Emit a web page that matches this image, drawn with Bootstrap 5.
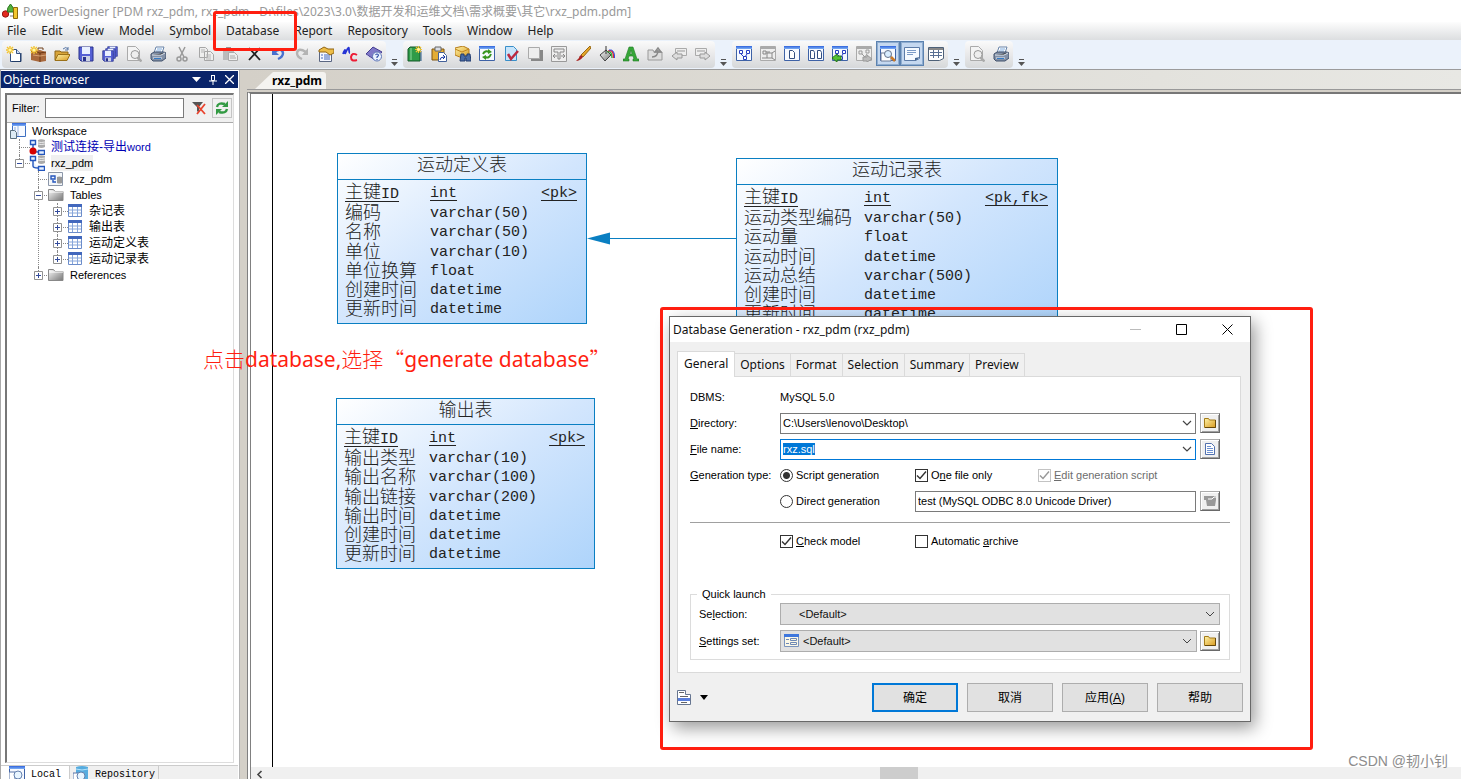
<!DOCTYPE html>
<html lang="en">
<head>
<meta charset="utf-8">
<meta name="viewport" content="width=device-width, initial-scale=1">
<title>PowerDesigner</title>
<link href="https://cdn.jsdelivr.net/npm/bootstrap@5.3.0/dist/css/bootstrap.min.css" rel="stylesheet">
<style>
:root{--ui:"Noto Sans","Noto Sans CJK SC",sans-serif;--small-ui:"Liberation Sans","Noto Sans CJK SC",sans-serif;--mono:"Liberation Mono","Noto Sans CJK SC",monospace;--red:#ff1e10;--ink:#0a7fc2}
body{font-family:var(--ui);font-size:12px;line-height:16px;color:#222;background:#d4d0c8;height:100vh;overflow:hidden}
svg{display:block;flex:none}
button{font:inherit;color:inherit}
.title-bar{height:22px;background:#fff;color:#999;padding:2px 2px 0;gap:5px;font-size:12px}
.menu-bar{height:18px;padding-left:7px;gap:15px;background:linear-gradient(#fdfdfd,#dcdee0)}
.menu-bar button,.plain{border:0;background:none;padding:0}
.tool-bar{height:30px;padding:1px 2px;background:#ebf2fb;border-bottom:1px solid #9b9b9b}
.tool-group{height:27px;border-radius:4px;background:linear-gradient(#fafafa,#e9e9ea 50%,#d6d8da)}
.tool-group button{width:24px;height:25px;border:0;background:none;padding:0 4px}
.tool-group button.pressed{border:1px solid #5c82b0;background:#c5d8f0;padding:0 3px;box-shadow:inset 0 0 0 1px #8fadd0}
.overflow-btn{width:17px;height:27px;border:0;background:none;padding:16px 0 0 5px}
.browser-pane{width:240px;background:#fff;border-left:1px solid #aaa;border-right:1px solid #b4b4b4;padding:1px 1px 0 0}
.pane-head{height:17px;background:#0a246a;color:#fff;padding:0 4px 0 2px;font-size:12px}
.pane-box{margin:5px 4px 2px 4px;border:2px solid #777;border-right:1px solid #ddd;border-bottom:1px solid #ddd}
.filter-row{height:28px;background:#f0f0f0;border-bottom:1px solid #aaa;padding:0 5px 2px;gap:5px;font:11px var(--small-ui);color:#000}
.filter-row input{width:139px;height:20px;border:1px solid #7a7a7a;background:#fff}
.filter-row .plain{margin-left:2px}
.refresh-btn{width:20px;height:20px;border:1px solid #c4c4c4;padding:1px;background:#f0f0f0}
.tree{padding-left:3px;font:11px/16px var(--small-ui);color:#000}
.tree .cjk{font-size:12px}
.tree .picked{background:#f0f0f0}
.tree .detached{color:#0000b4}
.tree ul{list-style:none;margin:0;padding:0}
.tree li{position:relative;padding-left:19px}
.tree li::before{content:"";position:absolute;left:9px;top:0;bottom:0;border-left:1px dotted #888}
.tree li:last-child::before{bottom:auto;height:8px}
.tree li::after{content:"";position:absolute;left:9px;top:8px;width:11px;border-top:1px dotted #888}
.tree-row{height:16px;gap:6px}
.twisty{position:absolute;z-index:1;left:5px;top:4px;width:9px;height:9px}
.pane-tabs{height:14px;background:#f0f0f0;border-top:1px solid #ccc;font:10px/18px var(--mono);color:#000;overflow:hidden}
.pane-tabs button{border:0;border-right:1px solid #ccc;background:none;padding:0 3px;gap:6px;height:18px}
.pane-tabs .on{background:#fff;padding:0 8px}
.editor{margin-left:7px;min-width:0}
.doc-tabs{height:20px;background:linear-gradient(90deg,#d4d0c8,#e8e8e4);padding:2px 0 0 8px;border-bottom:1px solid #999}
.doc-tab{border:0;padding:0 4px 0 17px;font-size:12px;line-height:16px;font-weight:700;color:#000;background:#f4f3f0;clip-path:polygon(18px 0,100% 0,100% 100%,0 100%);border-radius:0 3px 0 0}
.canvas-frame{margin-top:2px;border-left:4px double #808080;border-top:2px solid #777;background:#fff}
.model-canvas{position:relative;overflow:hidden}
.page-edge{margin-left:21px;width:1px;background:#000}
.entity{position:absolute;border:1px solid var(--ink);background:linear-gradient(145deg,#fff,#d3e6fd 50%,#aed4fb);color:#222;font:15px/18px var(--mono)}
.entity h2{font-size:18px;font-weight:300;line-height:25px;height:26px;margin:0;text-align:center;border-bottom:1px solid var(--ink)}
.entity table{width:100%;height:137px;margin:3px 0;color:#222}
.entity td{padding:0;white-space:pre}
.entity td:first-child{font-size:18px;font-weight:300;padding-left:7px;line-height:18px}
.entity td:first-child span{font-size:15px;font-weight:400}
.entity td:last-child{text-align:right;padding-right:9px}
.entity u{text-underline-offset:3px;text-decoration-thickness:1px}
.define-tbl{left:86px;top:59px;width:250px}
.record-tbl{left:485px;top:64px;width:322px}
.output-tbl{left:85px;top:304px;width:259px}
.define-tbl td:first-child,.output-tbl td:first-child{width:92px}
.record-tbl td:first-child{width:127px}
.link-line{position:absolute;left:336px;top:138px}
.h-scroll{height:12px;background:#f0f0f0}
.h-scroll .arrow{width:20px;border:0;padding:0 0 0 4px;background:none}
.h-scroll .track{flex:1}
.h-scroll .thumb{position:absolute;left:52%;width:38px;height:12px;background:#cdcdcd}
.note-box{position:absolute;border:3px solid var(--red);border-radius:3px;pointer-events:none}
.note-menu{left:213px;top:11px;width:84px;height:40px}
.note-dialog{left:660px;top:307px;width:653px;height:443px}
.note-text{position:absolute;left:203px;top:344px;font-size:21px;line-height:28px;color:var(--red);white-space:pre}
.note-text span{font-family:"Noto Sans CJK SC",sans-serif;font-weight:300}
.water{position:absolute;right:13px;bottom:8px;font:14px/20px var(--small-ui);color:#8d8d8d}
.gen-dialog{position:absolute;left:669px;top:316px;width:582px;background:#f0f0f0;border:1px solid #686868;box-shadow:4px 6px 16px rgba(0,0,0,.4);font:11px/14px var(--small-ui);color:#000}
.dlg-title{height:25px;background:#fff;padding:0 17px 0 3px;gap:35px;font:12px/24px var(--ui);color:#111}
.dlg-tabs{padding:9px 7px 0;font:12px/16px var(--ui)}
.dlg-tabs button{height:23px;border:1px solid #dadada;border-left:0;border-bottom:0;background:#f0f0f0;padding:0 5px;color:#111}
.dlg-tabs .on{height:26px;background:#fff;border-left:1px solid #dadada;padding:0 6px 2px;margin-bottom:-1px;position:relative}
.dlg-panel{margin:0 9px 0 7px;border:1px solid #dadada;background:#fff;padding:7px 11px 12px 12px}
.f-row{display:grid;grid-template-columns:90px 135px 1fr 20px;align-items:center;height:26px;margin-right:9px}
.f-row .wide{grid-column:2/4;margin-right:4px}
.f-row .rest{grid-column:3/4;margin-right:4px}
.combo{position:relative}
.combo input,.txt{width:100%;height:21px;border:1px solid #7a7a7a;padding:0 2px;outline:0;background:#fff;color:#000;display:block}
.combo input:focus{border-color:#0078d7}
.combo input::selection{background:#0078d7;color:#fff}
.combo button{position:absolute;right:4px;top:7px}
.bevel{width:20px;height:20px;border:1px solid #ababab;border-right-color:#696969;border-bottom-color:#696969;box-shadow:inset 1px 1px #fff,inset -1px -1px #a0a0a0;background:#f0f0f0;padding:0 1px}
.tick{display:flex;align-items:center;gap:3px}
.tick input{appearance:none;margin:0;width:13px;height:13px;border:1px solid #333;background:#fff center/11px no-repeat}
.tick input[type=checkbox]:checked{background-image:url("data:image/svg+xml,%3Csvg xmlns='http://www.w3.org/2000/svg' viewBox='0 0 11 11'%3E%3Cpath d='M1 5.5l3 3 6-7' fill='none' stroke='%23333' stroke-width='1.4'/%3E%3C/svg%3E")}
.tick input[type=radio]{border-radius:50%}
.tick input[type=radio]:checked{background-image:radial-gradient(circle,#333 3px,transparent 4px)}
.tick input:disabled{border-color:#888;opacity:.5}
.tick.off{color:#6d6d6d}
.one-file{width:123px}
.rule{border-top:1px solid #a0a0a0;margin:8px -1px 5px 0}
.dlg-panel fieldset{border:1px solid #dcdcdc;margin:33px -1px 0 0;padding:0 0 5px 8px}
.dlg-panel legend{float:none;width:auto;font-size:11px;line-height:14px;margin:0 0 0 -2px;padding:0 5px}
.quick{grid-template-columns:81px 1fr 20px}
.quick + .quick{margin-top:1px}
.quick .full{grid-column:2/4}
.drop{width:100%;height:22px;border:1px solid #adadad;padding:0 18px;font:inherit;color:#111;appearance:none;background:#e1e1e1 url("data:image/svg+xml,%3Csvg xmlns='http://www.w3.org/2000/svg' viewBox='0 0 10 6'%3E%3Cpath d='M1 1l4 4 4-4' fill='none' stroke='%23444'/%3E%3C/svg%3E") right 4px center/10px 6px no-repeat}
.with-icon{position:relative;margin-right:3px}
.with-icon svg{position:absolute;left:4px;top:3px}
.with-icon .drop{padding-left:22px}
.dlg-foot{padding:10px 7px 9px;gap:9px}
.dlg-foot .act{width:86px;height:29px;border:1px solid #adadad;background:#e1e1e1;font-size:12px;color:#000}
.dlg-foot .act.primary{border:2px solid #0078d7}
</style>
</head>
<body class="d-flex flex-column position-relative">
<svg width="0" height="0" class="position-absolute" aria-hidden="true">
<defs>
<linearGradient id="gold" x2="1" y2="1"><stop stop-color="#fff3a8"/><stop offset="1" stop-color="#d89a20"/></linearGradient>
<linearGradient id="sky" x2="0" y2="1"><stop stop-color="#2f63dd"/><stop offset="1" stop-color="#7fb0f4"/></linearGradient>
<linearGradient id="steel" x2="1" y2="1"><stop stop-color="#fafafa"/><stop offset="1" stop-color="#777"/></linearGradient>
<symbol id="spark" viewBox="0 0 16 16"><path d="M4 0v8M0 4h8M1 1l6 6M7 1L1 7" stroke="#f3c330" stroke-width="1.4"/><circle cx="4" cy="4" r="1.6" fill="#fff6a5"/></symbol>
<symbol id="new" viewBox="0 0 16 16"><path d="M4.500 3.500h6l4 4v8h-10z" fill="#fff" stroke="#334f80"/><path d="M10.500 3.500v4h4" fill="#cfe0f5" stroke="#334f80"/><path d="M15 7v8.500H6" fill="none" stroke="#203b66"/><use href="#spark"/></symbol>
<symbol id="case" viewBox="0 0 16 16"><path d="M1 5l9-1 6 2v9l-6 1-9-2z" fill="#a8683c"/><path d="M1 5l9 2 6-1M10 7v9" stroke="#6c3815" fill="none"/><path d="M3 9l7 1 6-1" stroke="#d6a273" fill="none"/><path d="M8 4V2h5v2" fill="none" stroke="#71401c"/><use href="#spark"/></symbol>
<symbol id="open" viewBox="0 0 16 16"><path d="M1 14V5h5l1 1h7v3" fill="#d9a53a" stroke="#8c6417"/><path d="M1 14.500l3-6h12l-3 6z" fill="url(#gold)" stroke="#9b7118"/><path d="M9 3q3-3 5 0m0-2v3h-3" fill="none" stroke="#5876a5"/></symbol>
<symbol id="save" viewBox="0 0 16 16"><path d="M1 1h14v14H3l-2-2z" fill="#5560d4" stroke="#28318b"/><path d="M4 1h8v7H4z" fill="#e9f0ff"/><path d="M4 10h8v5H4z" fill="#ccd3e5"/><path d="M5 11h3v4H5z" fill="#28318b"/></symbol>
<symbol id="saveall" viewBox="0 0 16 16"><use href="#save" x="5" width="11" height="11"/><use href="#save" x="3" y="2" width="11" height="11"/><use href="#save" y="4" width="12" height="12"/></symbol>
<symbol id="preview" viewBox="0 0 16 16"><path d="M1.500.5h8l4 4v10h-12z" fill="#f4f4f4" stroke="#aaa"/><circle cx="9" cy="8.500" r="4" fill="#eee" stroke="#999"/><path d="M11.500 11.500l4 4" stroke="#aaa" stroke-width="2.500"/></symbol>
<symbol id="print" viewBox="0 0 16 16"><path d="M4 7l2-6h8l-2 6z" fill="#fff" stroke="#6883a8"/><path d="M7 3h5M6 5h5" stroke="#7caade"/><path d="M1 8l3-2h10l2 1v5l-4 3H3l-2-2z" fill="#8391a7" stroke="#41516b"/><path d="M2 9h9l4-2M3 12h9" stroke="#e6edf6"/><path d="M4 12.500h7" stroke="#347ac4"/></symbol>
<symbol id="cut" viewBox="0 0 16 16"><path d="M5 1l5 10M11 1L6 11" stroke="#999" stroke-width="1.500"/><circle cx="5" cy="13" r="2" fill="none" stroke="#999" stroke-width="1.500"/><circle cx="11" cy="13" r="2" fill="none" stroke="#999" stroke-width="1.500"/></symbol>
<symbol id="copy" viewBox="0 0 16 16"><path d="M1.500 1.500h6l2 2v8h-8zM6.500 5.500h6l3 3v6h-9z" fill="#eee" stroke="#a6a6a6"/><path d="M8 9h5M8 11h5M8 13h5M3 4h4M3 6h3" stroke="#b5b5b5"/></symbol>
<symbol id="pasteoff" viewBox="0 0 16 16"><path d="M1 3h11v11H1z" fill="#bbb"/><path d="M4 1h5v3H4z" fill="#999"/><path d="M6.500 6.500h6l3 3v5h-9z" fill="#eee" stroke="#aaa"/><path d="M8 10h5M8 12h6" stroke="#aaa"/></symbol>
<symbol id="del" viewBox="0 0 16 16"><path d="M3 2l11 12M14 2L3 14" stroke="#222" stroke-width="1.800"/></symbol>
<symbol id="undo" viewBox="0 0 16 16"><path d="M4 6q8-5 9 1 0 4-5 6" fill="none" stroke="#4971cf" stroke-width="2.400"/><path d="M2 2v7h7z" fill="#4971cf"/></symbol>
<symbol id="redo" viewBox="0 0 16 16"><path d="M12 6Q4 1 3 7q0 4 5 6" fill="none" stroke="#b4b4b4" stroke-width="2.400"/><path d="M14 2v7H8z" fill="#b4b4b4"/></symbol>
<symbol id="props" viewBox="0 0 16 16"><path d="M1.500 5.500h12v10h-12z" fill="#f5f7ff" stroke="#5a6682"/><path d="M3 9h2M3 12h2M6 9h6M6 11h6M6 13h6" stroke="#4267ba"/><path d="M1 4l5-3 4 2h6v4l-4 2-4-3H1z" fill="#edbd47" stroke="#916513"/></symbol>
<symbol id="namecode" viewBox="0 0 16 16"><path d="M1 8Q4 0 3 8q4-9 4-5t1 4" fill="none" stroke="#2533d4" stroke-width="1.800"/><path d="M15 9q-5-3-6 2 0 5 6 3" fill="none" stroke="#ed1c35" stroke-width="2"/></symbol>
<symbol id="help" viewBox="0 0 16 16"><path d="M0 8l7-7 9 5-7 8z" fill="#8078c8" stroke="#443d90"/><path d="M0 9l8 6 7-8" fill="none" stroke="#d9d9f5"/><circle cx="11" cy="10.500" r="4.500" fill="#edf3ff" stroke="#5c75b4"/><path d="M9.500 9q1.500-2 3 0 0 1-1.500 2v1m0 1v1" fill="none" stroke="#3551aa" stroke-width="1.200"/></symbol>
<symbol id="book" viewBox="0 0 16 16"><path d="M1 3l2-2h10v14H1z" fill="#2f9b48" stroke="#155929"/><path d="M4 2v12" stroke="#8edc9d"/><path d="M14 5v10" stroke="#315c90"/><g transform="translate(8)"><use href="#spark" width="14" height="14"/></g></symbol>
<symbol id="clip" viewBox="0 0 16 16"><path d="M1 3h12v11H1z" fill="#e3ad35" stroke="#7e5511"/><path d="M4 1h6v4H4z" fill="#d9dce3" stroke="#666"/><path d="M7.500 6.500h5l3 3v6h-8z" fill="#fff" stroke="#426099"/><path d="M9 14q0-3 4-3m-1-2l2 2-2 2" fill="none" stroke="#1939a5"/></symbol>
<symbol id="find" viewBox="0 0 16 16"><path d="M0 2l8-2 6 3v5l-7 4-7-3z" fill="url(#gold)" stroke="#b67c1a"/><path d="M0 3l7 3 7-3" stroke="#c0851f" fill="none"/><path d="M6 8h3v2h3V8h3l1 7h-5v-3h-1v3H5z" fill="#486ba5" stroke="#223d6e"/></symbol>
<symbol id="win" viewBox="0 0 16 16"><path d="M.5.5h15v14H.5z" fill="#f6f9ff" stroke="#3e62a6"/><path d="M0 0h16v3H0z" fill="url(#sky)"/></symbol>
<symbol id="sync" viewBox="0 0 16 16"><use href="#win"/><path d="M4 8q2-4 6-2M12 8q-2 5-6 3" stroke="#37951f" stroke-width="2" fill="none"/><path d="M9 3v5l4-2zM7 9v5l-4-3z" fill="#37951f"/></symbol>
<symbol id="check" viewBox="0 0 16 16"><path d="M2.500.5h8l3 3v11h-11z" fill="#c7e4fa" stroke="#398fc9"/><path d="M5 8l3 5 7-8" fill="none" stroke="#bb2941" stroke-width="2.500"/></symbol>
<symbol id="shadow" viewBox="0 0 16 16"><path d="M4 4h12v11H4z" fill="#888"/><path d="M1.500 1.500h11v11h-11z" fill="#eee" stroke="#aaa"/></symbol>
<symbol id="textbox" viewBox="0 0 16 16"><path d="M.5.5h15v15H.5z" fill="#eee" stroke="#999"/><path d="M3 3h10v3H9v7H7V6H3zM2 10h4M10 10h4M4 8l-2 2 2 2M12 8l2 2-2 2" fill="none" stroke="#888"/></symbol>
<symbol id="brush" viewBox="0 0 16 16"><path d="M15 0L6 9l2 2 8-9z" fill="#e5a629" stroke="#986812"/><path d="M6 9l2 2q-3 4-7 4l3-3q0-2 2-3z" fill="#a92422"/></symbol>
<symbol id="bucket" viewBox="0 0 16 16"><path d="M1 9l6-5 5 5-6 6z" fill="url(#steel)" stroke="#444"/><path d="M7 0v8" stroke="#333"/><path d="M8 6q5-2 5 6" fill="none" stroke="#28ad38" stroke-width="1.300"/><path d="M9 5q6-2 5.500 7" fill="none" stroke="#e52732" stroke-width="1.300"/><path d="M10 4q6-1 5.500 8" fill="none" stroke="#2949e5"/></symbol>
<symbol id="fontA" viewBox="0 0 16 16"><path d="M6 1h4l4 12h2v2h-6v-2h1l-1-3H6l-1 3h1v2H0v-2h2zM8 4L7 8h2z" fill="#35a638" fill-rule="evenodd" stroke="#237d26" stroke-width=".6"/></symbol>
<symbol id="folderup" viewBox="0 0 16 16"><path d="M1 4h5l1 2h8v8H1z" fill="#ddd" stroke="#999"/><path d="M5 11q6 0 6-7M8 6l3-4 3 4z" fill="none" stroke="#888" stroke-width="1.500"/></symbol>
<symbol id="backoff" viewBox="0 0 16 16"><path d="M4.500 2.500h11v7h-11z" fill="#eee" stroke="#aaa"/><path d="M6 5h8" stroke="#999"/><path d="M1 10l5-4v2h5v4H6v2z" fill="#ddd" stroke="#999"/></symbol>
<symbol id="fwdoff" viewBox="0 0 16 16"><path d="M.5 2.500h11v7H.5z" fill="#eee" stroke="#aaa"/><path d="M2 5h8" stroke="#999"/><path d="M15 10l-5-4v2H5v4h5v2z" fill="#ddd" stroke="#999"/></symbol>
<symbol id="nodes" viewBox="0 0 16 16"><path d="M3.500 4.500h3v3h-3zM10.500 4.500h3v3h-3zM7.500 10.500h3v3h-3zM5 8l3 3M11 8l-2 3" fill="#fff" stroke="#293ec0"/></symbol>
<symbol id="diagram" viewBox="0 0 16 16"><use href="#win"/><use href="#nodes"/></symbol>
<symbol id="grayframe" viewBox="0 0 16 16"><path d="M.5.5h15v14H.5z" fill="#eee" stroke="#aaa"/><path d="M0 2h16" stroke="#aaa" stroke-width="2"/><path d="M3 5h3v3H3zM7 7h5v5H7zM6 6h4M2 12h5M12 12l3 2M12 7l3-2" fill="none" stroke="#888"/></symbol>
<symbol id="onepage" viewBox="0 0 16 16"><use href="#win"/><path d="M5.500 4.500h3l2 2v6h-5z" fill="#fff" stroke="#334e80"/></symbol>
<symbol id="twopage" viewBox="0 0 16 16"><use href="#win"/><path d="M2.500 4.500h3l1 2v6h-4zM9.500 4.500h3l1 2v6h-4z" fill="#fff" stroke="#334e80"/></symbol>
<symbol id="diaggo" viewBox="0 0 16 16"><use href="#diagram"/><path d="M0 12l5-4v2h4v4H5v2z" fill="#55c234" stroke="#287a18"/></symbol>
<symbol id="graygo" viewBox="0 0 16 16"><path d="M.5.5h15v14H.5z" fill="#eee" stroke="#aaa"/><path d="M0 2h16" stroke="#aaa" stroke-width="2"/><path d="M3 5h3v3H3zM10 4h3v3h-3zM6 8l3 3M11 8l-2 3" fill="none" stroke="#999"/><path d="M16 13l-5-4v2H7v4h4v1z" fill="#bbb" stroke="#999"/></symbol>
<symbol id="zoompage" viewBox="0 0 16 16"><use href="#win"/><path d="M1 7h7l3 2v6H1z" fill="#fff" stroke="#6c7b96"/><circle cx="8" cy="8" r="3.500" fill="#d9edff" stroke="#66738a"/><path d="M11 11l4 4" stroke="#c97927" stroke-width="2.500"/></symbol>
<symbol id="output" viewBox="0 0 16 16"><path d="M.5 1.500h15v11l-4 2H.5z" fill="#f6faff" stroke="#5c7ba7"/><path d="M3 4.500h9M3 6.500h9M3 8.500h6" stroke="#7c9bc7"/><path d="M16 11l-5 4v-3z" fill="#42638f"/></symbol>
<symbol id="result" viewBox="0 0 16 16"><path d="M.5 1.500h15v11l-4 2H.5z" fill="#fff" stroke="#4e6178"/><path d="M1 3h14" stroke="#888" stroke-width="2"/><path d="M2 6.500h12M2 9.500h12M5.500 4v8M10.500 4v8" stroke="#596f93"/></symbol>
<symbol id="more" viewBox="0 0 7 7"><path d="M1 .5h5" stroke="#555"/><path d="M0 3h7L3.500 7z" fill="#555"/></symbol>
<symbol id="db" viewBox="0 0 16 16"><path d="M9 1q3-1.500 7 0v7q-4 2-7 0z" fill="#aaa"/><path d="M9 3q3 1 7 0M9 5q3 1 7 0" stroke="#eee" fill="none"/><path d="M1.500 1.500h5v4h-5zM9.500 11.500h6v4h-6zM4 6v5q0 2 5 2" fill="#e6f1ff" stroke="#2456bd" stroke-width="1.400"/></symbol>
<symbol id="ws" viewBox="0 0 16 16"><path d="M2.500.5h13v13h-13z" fill="#f7faff" stroke="#3d6fc2"/><path d="M2 0h14v3H2z" fill="url(#sky)"/><path d="M8 3v10" stroke="#9cb8e4"/><path d="M4 5h2M4 7h2" stroke="#8dabdd"/><path d="M.5 7.500h4l2 2v6h-6z" fill="#dcebf5" stroke="#5b7180"/></symbol>
<symbol id="pdm" viewBox="0 0 16 16"><path d="M.5 1.500h14v13H.5z" fill="#f4f7fa" stroke="#8b96a8"/><path d="M3 5h4v3H3zM5 9v2h3" fill="none" stroke="#2456bd" stroke-width="1.400"/><path d="M9 6q2-1 5 0v6q-2 1-5 0z" fill="#999"/></symbol>
<symbol id="folder" viewBox="0 0 16 16"><path d="M.5 4V2.500h5L7 4.500h8v9H.5z" fill="url(#steel)" stroke="#888"/><path d="M1 5h14" stroke="#fff"/></symbol>
<symbol id="grid" viewBox="0 0 16 16"><path d="M1.500 1.500h13v12h-13z" fill="#fff" stroke="#6c8dca"/><path d="M1 1h14v3H1z" fill="#4268bd"/><path d="M2 7h12M2 10h12M5.500 4v9M10.500 4v9" stroke="#87a6da"/></symbol>
<symbol id="plus" viewBox="0 0 9 9"><path d="M.5.5h8v8h-8z" fill="#fff" stroke="#919191"/><path d="M2 4.500h5M4.500 2v5" stroke="#334b9c"/></symbol>
<symbol id="minus" viewBox="0 0 9 9"><path d="M.5.5h8v8h-8z" fill="#fff" stroke="#919191"/><path d="M2 4.500h5" stroke="#334b9c"/></symbol>
<symbol id="yfolder" viewBox="0 0 16 16"><path d="M2.500 12.500v-9h4l1 1.500h6v7.500z" fill="url(#gold)" stroke="#a47b18"/><path d="M13.500 5v7.500H3" fill="none" stroke="#66480a"/></symbol>
<symbol id="sheet" viewBox="0 0 16 16"><path d="M3.500 2.500h6l3 3v8h-9z" fill="#fff" stroke="#5271ae"/><path d="M5 5.500h4M5 7.500h6M5 9.500h6M5 11.500h6" stroke="#6d91d1"/></symbol>
<symbol id="down" viewBox="0 0 10 6"><path d="M1 1l4 4 4-4" fill="none" stroke="#444" stroke-width="1.200"/></symbol>
<symbol id="local" viewBox="0 0 16 16"><use href="#win"/><path d="M0 6h6v9H0z" fill="#fff" stroke="#5874a7"/><circle cx="9" cy="9" r="4" fill="#e8f5ff" stroke="#6480ad"/></symbol>
<symbol id="repo" viewBox="0 0 16 16"><path d="M3 1q6-2 12 0v12H3z" fill="#56acdf"/><path d="M3 3q6 2 12 0" fill="none" stroke="#b6e3fb"/><path d="M0 7h6v8H0z" fill="#fff" stroke="#5874a7"/><circle cx="8" cy="10" r="4" fill="#e8f5ff" stroke="#6480ad"/></symbol>
</defs></svg>

<header>
<div class="title-bar d-flex align-items-center">
<svg width="16" height="16" viewBox="0 0 16 16"><path d="M2 9l6-4M8 12h5" stroke="#777"/><circle cx="3.500" cy="10" r="3.200" fill="#e32b20" stroke="#951a12"/><path d="M8.500 0q4 4 3 8h-6q-1-4 3-8z" fill="#54b13f" stroke="#2b7721"/><path d="M11.500 3.500h4v11h-4z" fill="#f2c62e" stroke="#8d6a0a"/></svg>
<span>PowerDesigner [PDM rxz_pdm, rxz_pdm - D:\files\2023\3.0\数据开发和运维文档\需求概要\其它\rxz_pdm.pdm]</span>
</div>
<nav class="menu-bar d-flex align-items-center"><button>File</button><button>Edit</button><button>View</button><button>Model</button><button>Symbol</button><button>Database</button><button>Report</button><button>Repository</button><button>Tools</button><button>Window</button><button>Help</button></nav>
<div class="tool-bar d-flex" id="tools"></div>
</header>

<main class="d-flex flex-fill overflow-hidden">
<aside class="browser-pane d-flex flex-column flex-shrink-0">
<div class="pane-head d-flex align-items-center"><span class="me-auto">Object Browser</span>
<button class="plain" aria-label="Menu"><svg width="9" height="5"><path d="M0 0h9L4.500 5z" fill="#fff"/></svg></button>
<button class="plain mx-2" aria-label="Pin"><svg width="8" height="10" fill="none" stroke="#fff"><path d="M2.500 0v5.500h3V0M2 .5h4M0 6h8M4 6v4"/></svg></button>
<button class="plain" aria-label="Close"><svg width="9" height="9"><path d="M0 0l9 9M9 0L0 9" stroke="#fff" stroke-width="1.300"/></svg></button></div>
<div class="pane-box flex-fill overflow-hidden">
<div class="filter-row d-flex align-items-center"><label for="filter">Filter:</label><input id="filter" type="text">
<button class="plain" aria-label="Clear filter"><svg width="16" height="16" viewBox="0 0 16 16"><path d="M1 2h11L8 7v6l-2-2V7z" fill="#555"/><path d="M6 5l8 9M14 4l-8 10" stroke="#e9432d" stroke-width="1.800"/></svg></button>
<button class="refresh-btn" aria-label="Refresh"><svg width="16" height="16" viewBox="0 0 16 16"><path d="M3 7q1-5 8-3M13 9q-1 5-8 3" fill="none" stroke="#329a43" stroke-width="2.400"/><path d="M14 1v6H8zM2 15V9h6z" fill="#329a43"/></svg></button></div>
<div class="tree">
<div class="tree-row d-flex align-items-center"><svg width="16" height="16"><use href="#ws"/></svg>Workspace</div>
<ul>
<li><div class="tree-row detached d-flex align-items-center"><svg width="16" height="16" viewBox="0 0 16 16"><use href="#db"/><circle cx="4" cy="12" r="3.500" fill="#d60000"/></svg><span><span class="cjk">测试连接-导出</span>word</span></div></li>
<li><button class="plain twisty" aria-label="Collapse"><svg width="9" height="9"><use href="#minus"/></svg></button><div class="tree-row d-flex align-items-center"><svg width="16" height="16"><use href="#db"/></svg><span class="picked">rxz_pdm</span></div>
<ul>
<li><div class="tree-row d-flex align-items-center"><svg width="16" height="16"><use href="#pdm"/></svg>rxz_pdm</div></li>
<li><button class="plain twisty" aria-label="Collapse"><svg width="9" height="9"><use href="#minus"/></svg></button><div class="tree-row d-flex align-items-center"><svg width="16" height="16"><use href="#folder"/></svg>Tables</div>
<ul class="cjk" id="tables"></ul></li>
<li><button class="plain twisty" aria-label="Expand"><svg width="9" height="9"><use href="#plus"/></svg></button><div class="tree-row d-flex align-items-center"><svg width="16" height="16"><use href="#folder"/></svg>References</div></li>
</ul></li>
</ul></div></div>
<div class="pane-tabs d-flex"><button class="on d-flex"><svg width="16" height="16"><use href="#local"/></svg>Local</button><button class="d-flex"><svg width="16" height="16"><use href="#repo"/></svg>Repository</button></div>
</aside>

<section class="editor d-flex flex-column flex-fill">
<div class="doc-tabs d-flex"><button class="doc-tab">rxz_pdm</button></div>
<div class="canvas-frame d-flex flex-column flex-fill overflow-hidden">
<div class="model-canvas d-flex flex-fill"><div class="page-edge"></div>
<article class="entity define-tbl"><h2>运动定义表</h2><table>
<tr><td><u>主键<span>ID</span></u></td><td><u>int</u></td><td><u>&lt;pk&gt;</u></td></tr>
<tr><td>编码</td><td>varchar(50)</td><td></td></tr><tr><td>名称</td><td>varchar(50)</td><td></td></tr><tr><td>单位</td><td>varchar(10)</td><td></td></tr><tr><td>单位换算</td><td>float</td><td></td></tr><tr><td>创建时间</td><td>datetime</td><td></td></tr><tr><td>更新时间</td><td>datetime</td><td></td></tr></table></article>
<svg class="link-line" width="149" height="13"><path d="M20 6.500h129" stroke="#0a7fc2"/><path d="M0 6.500L23 .5v12z" fill="#0a7fc2"/></svg>
<article class="entity record-tbl"><h2>运动记录表</h2><table>
<tr><td><u>主键<span>ID</span></u></td><td><u>int</u></td><td><u>&lt;pk,fk&gt;</u></td></tr>
<tr><td>运动类型编码</td><td>varchar(50)</td><td></td></tr><tr><td>运动量</td><td>float</td><td></td></tr><tr><td>运动时间</td><td>datetime</td><td></td></tr><tr><td>运动总结</td><td>varchar(500)</td><td></td></tr><tr><td>创建时间</td><td>datetime</td><td></td></tr><tr><td>更新时间</td><td>datetime</td><td></td></tr></table></article>
<article class="entity output-tbl"><h2>输出表</h2><table>
<tr><td><u>主键<span>ID</span></u></td><td><u>int</u></td><td><u>&lt;pk&gt;</u></td></tr>
<tr><td>输出类型</td><td>varchar(10)</td><td></td></tr><tr><td>输出名称</td><td>varchar(100)</td><td></td></tr><tr><td>输出链接</td><td>varchar(200)</td><td></td></tr><tr><td>输出时间</td><td>datetime</td><td></td></tr><tr><td>创建时间</td><td>datetime</td><td></td></tr><tr><td>更新时间</td><td>datetime</td><td></td></tr></table></article>
</div>
<div class="h-scroll d-flex position-relative"><button class="arrow" aria-label="Scroll left"><svg width="8" height="12"><path d="M6.500 4L3 7.500 6.500 11" fill="none" stroke="#444" stroke-width="1.600"/></svg></button><div class="track"></div><div class="thumb"></div></div>
</div>
</section>
</main>

<div class="gen-dialog" role="dialog" aria-label="Database Generation">
<div class="dlg-title d-flex align-items-center"><span class="me-auto">Database Generation - rxz_pdm (rxz_pdm)</span>
<button class="plain" aria-label="Minimize"><svg width="11" height="11"><path d="M0 5.500h11" stroke="#bbb"/></svg></button>
<button class="plain" aria-label="Maximize"><svg width="11" height="11"><path d="M.5.5h10v10H.5z" fill="none" stroke="#000"/></svg></button>
<button class="plain" aria-label="Close"><svg width="11" height="11"><path d="M.5.5l10 10M10.500.5l-10 10" stroke="#000"/></svg></button></div>
<div class="dlg-tabs d-flex align-items-end"><button class="on">General</button><button>Options</button><button>Format</button><button>Selection</button><button>Summary</button><button>Preview</button></div>
<div class="dlg-panel">
<div class="f-row"><span>DBMS:</span><span>MySQL 5.0</span></div>
<div class="f-row"><label for="dir"><u>D</u>irectory:</label><div class="wide combo"><input id="dir" type="text" value="C:\Users\lenovo\Desktop\"><button class="plain" aria-label="Directories"><svg width="10" height="6"><use href="#down"/></svg></button></div><button class="bevel" aria-label="Browse"><svg width="16" height="16"><use href="#yfolder"/></svg></button></div>
<div class="f-row"><label for="fname"><u>F</u>ile name:</label><div class="wide combo"><input id="fname" type="text" value="rxz.sql"><button class="plain" aria-label="File names"><svg width="10" height="6"><use href="#down"/></svg></button></div><button class="bevel" aria-label="File"><svg width="16" height="16"><use href="#sheet"/></svg></button></div>
<div class="f-row"><span><u>G</u>eneration type:</span><label class="tick"><input type="radio" name="gen" checked>Script generation</label><div class="d-flex"><label class="tick one-file"><input type="checkbox" checked><span>O<u>n</u>e file only</span></label><label class="tick off"><input type="checkbox" checked disabled><span><u>E</u>dit generation script</span></label></div></div>
<div class="f-row"><span></span><label class="tick"><input type="radio" name="gen">Direct generation</label><div class="rest"><input class="txt" type="text" aria-label="Connection" value="test (MySQL ODBC 8.0 Unicode Driver)"></div><button class="bevel" aria-label="Connect"><svg width="16" height="16" viewBox="0 0 16 16"><path d="M2 3h12v4l-1 6H5L4 7H2z" fill="#999"/><path d="M6 6h4l2-2h2" stroke="#fff" fill="none"/></svg></button></div>
<div class="rule"></div>
<div class="f-row"><span></span><label class="tick"><input type="checkbox" checked><span><u>C</u>heck model</span></label><label class="tick"><input type="checkbox"><span>Automatic <u>a</u>rchive</span></label></div>
<fieldset><legend>Quick launch</legend>
<div class="f-row quick"><label for="sel">Se<u>l</u>ection:</label><div class="full"><select class="drop" id="sel"><option>&lt;Default&gt;</option></select></div></div>
<div class="f-row quick"><label for="set"><u>S</u>ettings set:</label><div class="with-icon"><select class="drop" id="set"><option>&lt;Default&gt;</option></select><svg width="16" height="16" viewBox="0 0 16 16"><path d="M.5 1.500h14v12H.5z" fill="#fbf8e7" stroke="#7a94bd"/><path d="M0 1h15v3H0z" fill="#3e77dd"/><path d="M2 6.500h3M2 10.500h3M6.500 5.500h6v2h-6zM6.500 9.500h6v2h-6z" fill="none" stroke="#6d88b5"/></svg></div><button class="bevel" aria-label="Browse settings"><svg width="16" height="16"><use href="#yfolder"/></svg></button></div>
</fieldset>
</div>
<div class="dlg-foot d-flex align-items-center"><button class="plain d-flex align-items-center gap-2 me-auto" aria-label="Menu"><svg width="15" height="15" viewBox="0 0 15 15"><path d="M.5.5h8v4h5v10H.5z" fill="#fff" stroke="#677691"/><path d="M2 2.500h5M3 6.500h8M4 12.500h6" stroke="#666"/><path d="M1 8h12v3H1z" fill="#5a7fdc"/></svg><svg width="8" height="5"><path d="M0 0h8L4 5z"/></svg></button>
<button class="act primary">确定</button><button class="act">取消</button><button class="act">应用(<u>A</u>)</button><button class="act">帮助</button></div>
</div>

<div class="note-box note-menu"></div>
<div class="note-box note-dialog"></div>
<div class="note-text"><span>点击</span>database,<span>选择“</span>generate database<span>”</span></div>
<div class="water">CSDN @韧小钊</div>

<script src="https://cdn.jsdelivr.net/npm/bootstrap@5.3.0/dist/js/bootstrap.bundle.min.js"></script>
<script>
const groups = [
  ['new','case','open','save','saveall','preview','print','cut','copy','pasteoff','del','undo','redo','props','namecode','help'],
  ['book','clip','find','sync','check','shadow','textbox','brush','bucket','fontA','folderup','backoff','fwdoff'],
  ['diagram','grayframe','onepage','twopage','diaggo','graygo','zoompage','output','result'],
  ['preview','print']
];
const pressed = ['zoompage','output'];
document.getElementById('tools').innerHTML = groups.map(g =>
  '<div class="tool-group d-flex">' + g.map(i => `<button aria-label="${i}"${pressed.includes(i) ? ' class="pressed"' : ''}><svg width="16" height="16"><use href="#${i}"/></svg></button>`).join('') +
  '</div><button class="overflow-btn" aria-label="More"><svg width="7" height="7"><use href="#more"/></svg></button>').join('');
document.getElementById('tables').innerHTML = ['杂记表','输出表','运动定义表','运动记录表'].map(t =>
  `<li><button class="plain twisty" aria-label="Expand"><svg width="9" height="9"><use href="#plus"/></svg></button><div class="tree-row d-flex align-items-center"><svg width="16" height="16"><use href="#grid"/></svg>${t}</div></li>`).join('');
const fileName = document.getElementById('fname');
fileName.focus();
fileName.select();
</script>
</body>
</html>
